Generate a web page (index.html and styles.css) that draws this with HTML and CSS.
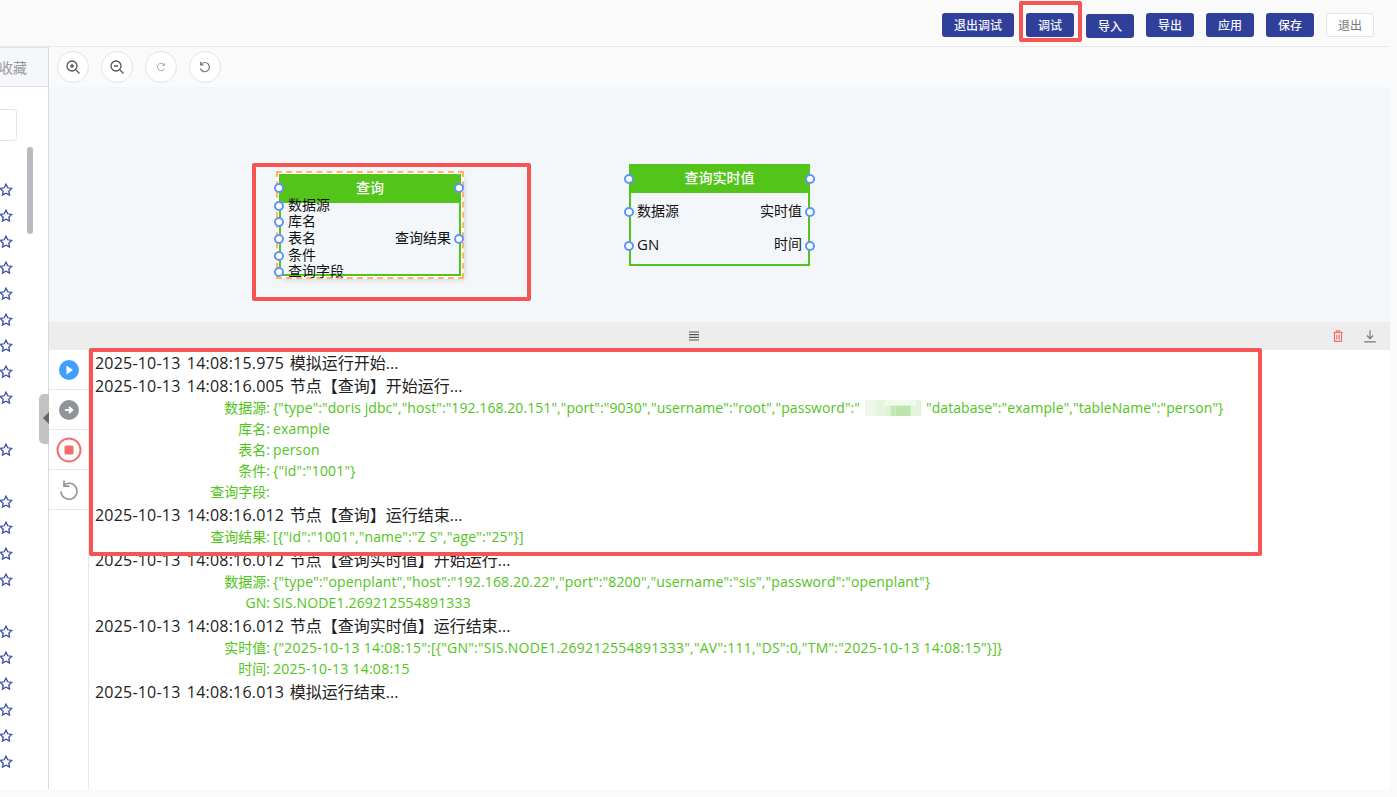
FILE: index.html
```html
<!DOCTYPE html>
<html lang="zh">
<head>
<meta charset="utf-8">
<title>调试</title>
<link rel="stylesheet" href="styles.css">
</head>
<body>
<svg class="defs" width="0" height="0"><symbol id="star" viewBox="0 0 12 12"><path d="M6 1l1.5 3.1 3.4.5-2.5 2.4.6 3.4L6 8.8l-3 1.6.6-3.4L1.1 4.6l3.4-.5z"/></symbol></svg>
<div class="app">
  <header class="topbar">
    <button class="btn">退出调试</button>
    <button class="btn">调试</button>
    <button class="btn btn-low">导入</button>
    <button class="btn">导出</button>
    <button class="btn">应用</button>
    <button class="btn">保存</button>
    <button class="btn btn-plain">退出</button>
  </header>
  <div class="main">
    <aside class="side">
      <div class="side-tab">收藏</div>
      <div class="side-search"><div class="search-box"></div></div>
      <div class="side-list">
        <div class="star-row"><svg class="star"><use href="#star"/></svg></div>
        <div class="star-row"><svg class="star"><use href="#star"/></svg></div>
        <div class="star-row"><svg class="star"><use href="#star"/></svg></div>
        <div class="star-row"><svg class="star"><use href="#star"/></svg></div>
        <div class="star-row"><svg class="star"><use href="#star"/></svg></div>
        <div class="star-row"><svg class="star"><use href="#star"/></svg></div>
        <div class="star-row"><svg class="star"><use href="#star"/></svg></div>
        <div class="star-row"><svg class="star"><use href="#star"/></svg></div>
        <div class="star-row"><svg class="star"><use href="#star"/></svg></div>
        <div class="star-row"></div>
        <div class="star-row"><svg class="star"><use href="#star"/></svg></div>
        <div class="star-row"></div>
        <div class="star-row"><svg class="star"><use href="#star"/></svg></div>
        <div class="star-row"><svg class="star"><use href="#star"/></svg></div>
        <div class="star-row"><svg class="star"><use href="#star"/></svg></div>
        <div class="star-row"><svg class="star"><use href="#star"/></svg></div>
        <div class="star-row"></div>
        <div class="star-row"><svg class="star"><use href="#star"/></svg></div>
        <div class="star-row"><svg class="star"><use href="#star"/></svg></div>
        <div class="star-row"><svg class="star"><use href="#star"/></svg></div>
        <div class="star-row"><svg class="star"><use href="#star"/></svg></div>
        <div class="star-row"><svg class="star"><use href="#star"/></svg></div>
        <div class="star-row"><svg class="star"><use href="#star"/></svg></div>
      </div>
      <div class="side-scroll"></div>
    </aside>
    <section class="work">
      <div class="toolbar">
        <button class="round"><svg viewBox="0 0 16 16" class="ico"><circle cx="7" cy="7" r="5"/><path d="M11 11l3.5 3.5M7 5v4M5 7h4"/></svg></button>
        <button class="round"><svg viewBox="0 0 16 16" class="ico"><circle cx="7" cy="7" r="5"/><path d="M11 11l3.5 3.5M5 7h4"/></svg></button>
        <button class="round"><svg viewBox="0 0 16 16" class="ico ico-light"><path d="M11.5 5.5A4.2 4.2 0 1 0 12 9.5"/><path d="M12 3.5v2.6H9.4"/></svg></button>
        <button class="round"><svg viewBox="0 0 16 16" class="ico ico-mid"><path d="M4 5.5A4.6 4.6 0 1 1 3.4 9.5"/><path d="M3.6 2.8v3h3"/></svg></button>
      </div>
      <div class="canvas">
        <div class="node node-a">
          <div class="node-head">查询</div>
          <span class="port" style="left:-7px;top:9px"></span>
          <span class="port" style="left:173px;top:9px"></span>
          <span class="port" style="left:-7px;top:27px"></span>
          <span class="port" style="left:-7px;top:43px"></span>
          <span class="port" style="left:-7px;top:60px"></span>
          <span class="port" style="left:-7px;top:77px"></span>
          <span class="port" style="left:-7px;top:93px"></span>
          <span class="port" style="left:173px;top:60px"></span>
          <span class="nlabel" style="left:7px;top:23px">数据源</span>
          <span class="nlabel" style="left:7px;top:39px">库名</span>
          <span class="nlabel" style="left:7px;top:56px">表名</span>
          <span class="nlabel" style="left:7px;top:73px">条件</span>
          <span class="nlabel" style="left:7px;top:89px">查询字段</span>
          <span class="nlabel" style="right:8px;top:56px">查询结果</span>
        </div>
        <div class="node node-b">
          <div class="node-head">查询实时值</div>
          <span class="port" style="left:-7px;top:10px"></span>
          <span class="port" style="right:-7px;top:10px"></span>
          <span class="port" style="left:-7px;top:43px"></span>
          <span class="port" style="left:-7px;top:77px"></span>
          <span class="port" style="right:-7px;top:43px"></span>
          <span class="port" style="right:-7px;top:77px"></span>
          <span class="nlabel" style="left:6px;top:40px">数据源</span>
          <span class="nlabel nlabel-lg" style="left:6px;top:73px">GN</span>
          <span class="nlabel" style="right:6px;top:40px">实时值</span>
          <span class="nlabel" style="right:6px;top:73px">时间</span>
        </div>
      </div>
      <div class="panel-bar">
        <svg class="grip" viewBox="0 0 12 12"><path d="M1 2h10M1 4.7h10M1 7.3h10M1 10h10"/></svg>
        <div class="panel-actions">
          <svg class="act act-del" viewBox="0 0 12 12"><path d="M2 3h8M4.5 3V1.6h3V3M3 3v7.6h6V3M5 5v4M7 5v4"/></svg>
          <svg class="act act-down" viewBox="0 0 12 12"><path d="M6 1v7M3.4 5.6L6 8.2l2.6-2.6M1 11h10"/></svg>
        </div>
      </div>
      <div class="console">
        <div class="tools">
          <div class="tool"><svg viewBox="0 0 22 22" class="tool-ico"><circle cx="11" cy="11" r="10" fill="#409eff"/><path d="M8.5 6.5l6.5 4.5-6.5 4.5z" fill="#fff"/></svg></div>
          <div class="tool"><svg viewBox="0 0 22 22" class="tool-ico"><circle cx="11" cy="11" r="10" fill="#909399"/><path d="M7 11h6.5M11 8l3.2 3-3.2 3" fill="none" stroke="#fff" stroke-width="2"/></svg></div>
          <div class="tool"><svg viewBox="0 0 26 26" class="tool-ico-lg"><circle cx="13" cy="13" r="11.5" fill="none" stroke="#f56c6c" stroke-width="2"/><rect x="8.5" y="8.5" width="9" height="9" rx="1.5" fill="#f56c6c"/></svg></div>
          <div class="tool"><svg viewBox="0 0 22 22" class="tool-ico-undo"><path d="M5.4 6.5A8 8 0 1 1 3 12.5" fill="none" stroke="#909399" stroke-width="1.6"/><path d="M6 1.5v5.6h5.4" fill="none" stroke="#909399" stroke-width="1.6"/></svg></div>
        </div>
        <div class="log">
          <div class="log-line"><span class="ts">2025-10-13 14:08:15.975</span> 模拟运行开始...</div>
          <div class="log-line"><span class="ts">2025-10-13 14:08:16.005</span> 节点【查询】开始运行...</div>
          <div class="log-kv"><span class="k">数据源:</span><span class="v v-tight">{"type":"doris jdbc","host":"192.168.20.151","port":"9030","username":"root","password":"<span class="mosaic"><svg viewBox="0 0 13 3" preserveAspectRatio="none"><rect x="1" y="0" width="2" height="3" fill="#eef8e8"/><rect x="3" y="0" width="2" height="3" fill="#e6f5de"/><rect x="5" y="1" width="1" height="2" fill="#dff2d5"/><rect x="6" y="1" width="1" height="2" fill="#c4e8b0"/><rect x="7" y="1" width="3" height="2" fill="#bfe6aa"/><rect x="10" y="0" width="2" height="3" fill="#e2f4d9"/><rect x="5" y="0" width="6" height="1" fill="#f1faec"/></svg></span>"database":"example","tableName":"person"}</span></div>
          <div class="log-kv"><span class="k">库名:</span><span class="v">example</span></div>
          <div class="log-kv"><span class="k">表名:</span><span class="v">person</span></div>
          <div class="log-kv"><span class="k">条件:</span><span class="v">{"id":"1001"}</span></div>
          <div class="log-kv"><span class="k">查询字段:</span><span class="v"></span></div>
          <div class="log-line"><span class="ts">2025-10-13 14:08:16.012</span> 节点【查询】运行结束...</div>
          <div class="log-kv"><span class="k">查询结果:</span><span class="v">[{"id":"1001","name":"Z S","age":"25"}]</span></div>
          <div class="log-line"><span class="ts">2025-10-13 14:08:16.012</span> 节点【查询实时值】开始运行...</div>
          <div class="log-kv"><span class="k">数据源:</span><span class="v">{"type":"openplant","host":"192.168.20.22","port":"8200","username":"sis","password":"openplant"}</span></div>
          <div class="log-kv"><span class="k">GN:</span><span class="v">SIS.NODE1.269212554891333</span></div>
          <div class="log-line"><span class="ts">2025-10-13 14:08:16.012</span> 节点【查询实时值】运行结束...</div>
          <div class="log-kv"><span class="k">实时值:</span><span class="v v-wide">{"2025-10-13 14:08:15":[{"GN":"SIS.NODE1.269212554891333","AV":111,"DS":0,"TM":"2025-10-13 14:08:15"}]}</span></div>
          <div class="log-kv"><span class="k">时间:</span><span class="v v-wide">2025-10-13 14:08:15</span></div>
          <div class="log-line"><span class="ts">2025-10-13 14:08:16.013</span> 模拟运行结束...</div>
        </div>
      </div>
    </section>
  </div>
  <div class="collapse"></div>
  <div class="mark mark-btn"></div>
  <div class="mark mark-node"></div>
  <div class="mark mark-log"></div>
</div>
</body>
</html>
```
FILE: styles.css
```css
* { box-sizing: border-box; }
html, body { margin: 0; padding: 0; }
body { background: #fafafa; font-family: "Open Sans", "Noto Sans CJK SC", sans-serif; overflow: hidden; }
.defs { position: absolute; }
.app { position: relative; width: 1397px; height: 797px; display: flex; flex-direction: column; overflow: hidden; background: #fafafa; }

.topbar { height: 47px; flex: none; display: flex; justify-content: flex-end; align-items: flex-start; gap: 12px; padding: 13px 16px 0 0; border-bottom: 1px solid #e9e9eb; margin-right: 7px; }
.btn { height: 24px; width: 48px; padding: 0; border: 0; border-radius: 3px; background: #30409a; color: #f4f5fb; font: 500 12px/24px "Noto Sans CJK SC", sans-serif; }
.btn:first-child { width: 72px; }
.btn-low { margin-top: 1px; }
.btn-plain { background: #fff; border: 1px solid #e1e3ea; color: #777; font-weight: 400; line-height: 22px; }

.main { flex: none; height: 742px; display: flex; }
.side { position: relative; flex: none; width: 49px; background: #fff; border-right: 1px solid #d5daea; display: flex; flex-direction: column; overflow: hidden; }
.side-tab { height: 40px; flex: none; display: flex; justify-content: flex-end; background: #f5f7fb; border-bottom: 1px solid #dfe3ee; border-top: 1px solid #dfe3ee; color: #9a9a9a; font: 14px/38px "Noto Sans CJK SC", sans-serif; white-space: nowrap; padding-right: 21px; }
.side-search { height: 54px; padding-top: 22px; flex: none; }
.search-box { width: 17px; height: 32px; background: #fff; border: 1px solid #e1e4ec; border-left: 0; border-radius: 0 4px 4px 0; }
.side-list { margin-top: 36px; display: flex; flex-direction: column; }
.star-row { height: 26px; flex: none; display: flex; align-items: center; }
.star { width: 14px; height: 14px; margin-left: -1.5px; fill: none; stroke: #3a4aa8; stroke-width: 1.1; }
.side-scroll { position: absolute; left: 27px; top: 100px; width: 6px; height: 87px; border-radius: 3px; background: #b8bcc0; }

.work { flex: none; width: 1341px; display: flex; flex-direction: column; }
.toolbar { height: 40px; flex: none; display: flex; gap: 12px; padding: 4px 0 0 8px; background: #fafafa; }
.round { width: 32px; height: 32px; padding: 0; border: 1px solid #e3e4ea; border-radius: 50%; background: #fff; display: flex; align-items: center; justify-content: center; }
.ico { width: 16px; height: 16px; fill: none; stroke: #555; stroke-width: 1.3; }
.ico-light { stroke: #999; stroke-width: 1; width: 14px; height: 14px; }
.ico-mid { stroke: #777; stroke-width: 1.2; }

.canvas { position: relative; height: 235px; flex: none; background: #f3f7fa; }
.node { position: absolute; background: #f3f7fa; border: 2px solid #52c41a; border-top: 0; }
.node-a { left: 230px; top: 87px; width: 182px; height: 102px; outline: 2px dashed #ffb366; outline-offset: 1px; box-shadow: 0 0 0 3px #fff, 3px 3px 6px rgba(0,0,0,.18); }
.node-b { left: 580px; top: 77px; width: 181px; height: 102px; }
.node-head { height: 29px; margin: 0 -2px; background: #52c41a; color: #fff; font: 500 14px/27px "Noto Sans CJK SC", sans-serif; text-align: center; }
.port { position: absolute; width: 10px; height: 10px; border-radius: 50%; background: #fff; border: 2px solid #5f92ff; }
.nlabel { position: absolute; font: 14px/14px "Noto Sans CJK SC", "Open Sans", sans-serif; color: #111; white-space: nowrap; }
.node-b .nlabel { font-family: "Open Sans", "Noto Sans CJK SC", sans-serif; }
.node-b .nlabel-lg { font-size: 15px; }

.panel-bar { position: relative; height: 28px; flex: none; background: #ededed; display: flex; align-items: center; justify-content: center; padding-right: 52px; }
.grip { width: 12px; height: 12px; fill: none; stroke: #555; stroke-width: 1.2; }
.panel-actions { position: absolute; right: 13px; top: 7px; display: flex; gap: 18px; }
.act { width: 14px; height: 14px; fill: none; stroke-width: 1; }
.act-del { stroke: #f56c6c; }
.act-down { stroke: #777; }

.console { height: 439px; flex: none; display: flex; background: #fff; }
.tools { width: 40px; flex: none; border-right: 1px solid #e4e7ed; }
.tool { height: 40px; border-bottom: 1px solid #e4e7ed; display: flex; align-items: center; justify-content: center; }
.tool-ico { width: 22px; height: 22px; }
.tool-ico-lg { width: 26px; height: 26px; }
.tool-ico-undo { width: 22px; height: 22px; }
.log { flex: 1; padding: 0 0 0 6px; }
.log-line { height: 23px; margin-top: 1px; font: 16px/25px "Open Sans", "Noto Sans CJK SC", sans-serif; word-spacing: 1.5px; color: #222; white-space: nowrap; }
.log-line + .log-line { margin-top: 0; }
.ts { letter-spacing: .2px; word-spacing: 2px; }
.log-kv { height: 21px; display: flex; font: 14px/21px "Open Sans", "Noto Sans CJK SC", sans-serif; color: #52c41a; white-space: nowrap; margin-left: -6px; }
.k { width: 181px; flex: none; text-align: right; margin-right: 3px; }
.v { letter-spacing: .15px; }
.v-tight { letter-spacing: .07px; }
.v-wide { letter-spacing: .25px; }
.mosaic { display: inline-block; width: 66px; height: 16px; vertical-align: -3px; }
.mosaic svg { display: block; width: 66px; height: 16px; }

.collapse { position: absolute; left: 39px; top: 394px; width: 10px; height: 50px; background: #c2c2c2; border-radius: 5px 0 0 5px; }
.collapse::after { content: ""; position: absolute; left: 4px; top: 18px; border-style: solid; border-width: 6px 6px 6px 0; border-color: transparent #666 transparent transparent; }

.mark { position: absolute; border: 4px solid #f55555; border-radius: 2px; pointer-events: none; }
.mark-btn { left: 1019px; top: 1px; width: 63px; height: 41px; }
.mark-node { left: 252px; top: 163px; width: 279px; height: 138px; }
.mark-log { left: 89px; top: 348px; width: 1173px; height: 208px; }
```
